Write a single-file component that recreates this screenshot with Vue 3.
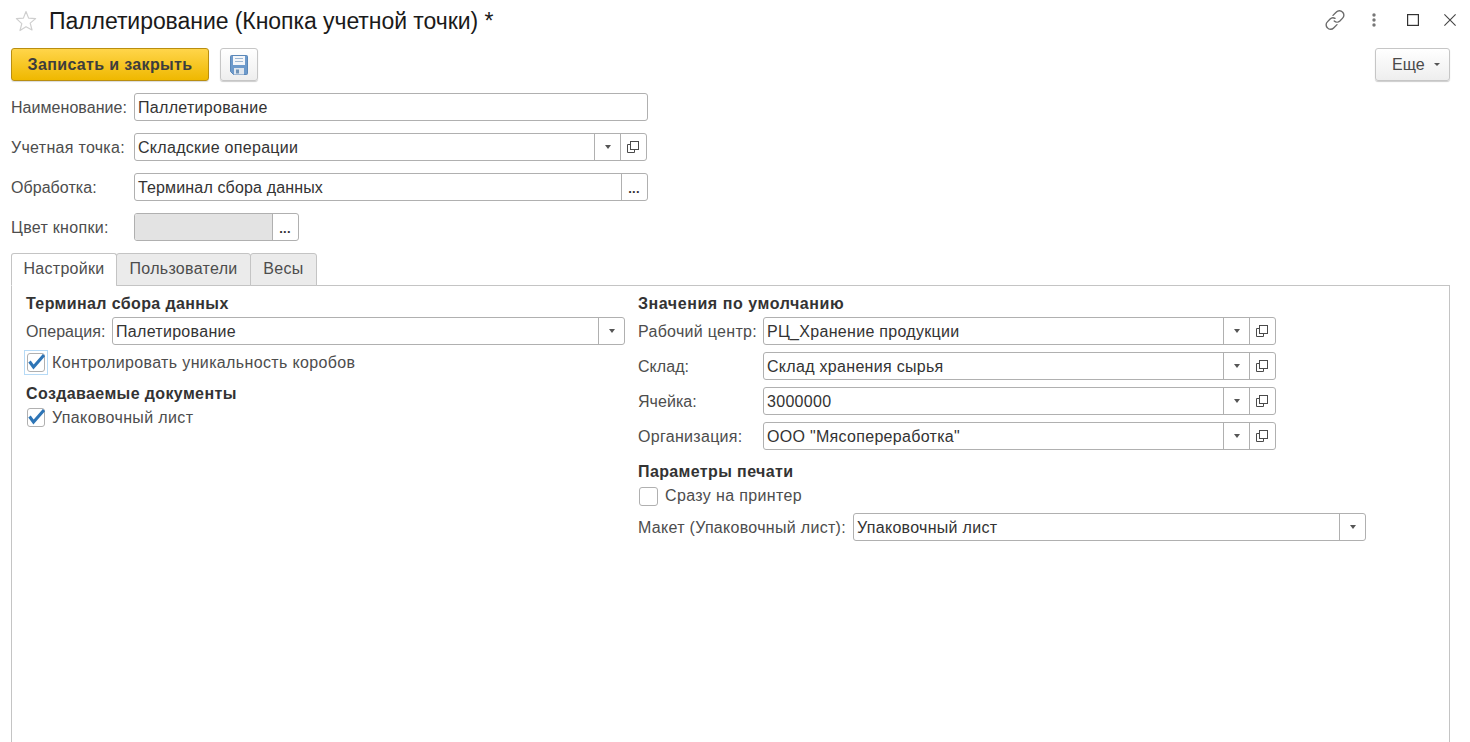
<script setup>
const leftFields = { label: 'Операция:', value: 'Палетирование' }
const rightFields = [
  { label: 'Рабочий центр:', value: 'РЦ_Хранение продукции', tight: false },
  { label: 'Склад:', value: 'Склад хранения сырья', tight: true },
  { label: 'Ячейка:', value: '3000000', tight: true },
  { label: 'Организация:', value: 'ООО "Мясопереработка"', tight: false },
]
</script>

<template>
  <div class="page">
    <header class="head">
      <svg class="star" viewBox="0 0 22 22" width="22" height="22">
        <path d="M11 1.500l2.600 6.600 7 .5-5.400 4.500 1.800 6.900L11 16.700 5 20.500l1.800-6.900L1.400 8.600l7-.5z" fill="#fff" stroke="#cfcfcf" stroke-width="1.200" stroke-linejoin="round"/>
      </svg>
      <h1 class="title">Паллетирование (Кнопка учетной точки) *</h1>
      <div class="head-icons">
        <svg class="ico-link" viewBox="2 2 16 16" width="20" height="20" fill="none" stroke="#6a6a6a" stroke-width="1.100" stroke-linecap="round">
          <path d="M8.400 6.300l2.700-2.700a3.300 3.300 0 0 1 4.900 0.100 3.300 3.300 0 0 1 .1 4.800l-2.200 2.300a3.200 3.200 0 0 1-4.500 0"/>
          <path d="M11.600 13.700l-2.700 2.700a3.300 3.300 0 0 1-4.900-.1 3.300 3.300 0 0 1-.1-4.800l2.200-2.300a3.200 3.200 0 0 1 3.900-.5"/>
        </svg>
        <svg class="ico-more" viewBox="0 0 4 14" width="4" height="14" fill="#777">
          <circle cx="2" cy="2" r="1.700"/><circle cx="2" cy="7" r="1.700"/><circle cx="2" cy="12" r="1.700"/>
        </svg>
        <svg class="ico-max" viewBox="0 0 12 12" width="12" height="12" fill="none" stroke="#333" stroke-width="1.200"><rect x=".6" y=".6" width="10.800" height="10.800"/></svg>
        <svg class="ico-close" viewBox="0 0 12 12" width="12" height="12" fill="none" stroke="#444" stroke-width="1.100"><path d="M.4.400l11.200 11.200M11.600.400L.4 11.600"/></svg>
      </div>
    </header>

    <div class="toolbar">
      <button class="btn-primary">Записать и закрыть</button>
      <button class="btn-save">
        <svg viewBox="0 0 18 20" width="18" height="20">
          <path d="M0.500 1.500a1 1 0 0 1 1-1h15a1 1 0 0 1 1 1v17a1 1 0 0 1-1 1h-13l-3-3z" fill="#6d9acb" stroke="#5a87b8" stroke-width="1"/>
          <rect x="3" y="1" width="12" height="9" fill="#f4f6f9"/>
          <path d="M5 3.500h8M5 6.500h8" stroke="#9fb8d2" stroke-width="1"/>
          <rect x="4" y="13" width="10" height="6.500" fill="#dfe6ee"/>
          <rect x="6" y="14.500" width="3" height="4" fill="#6f93b8"/>
        </svg>
      </button>
      <button class="btn-more">Еще<i class="tri small"></i></button>
    </div>

    <div class="form">
      <div class="row">
        <label class="lbl lbl-main tight">Наименование:</label>
        <div class="field w514"><span class="val">Паллетирование</span></div>
      </div>
      <div class="row">
        <label class="lbl lbl-main">Учетная точка:</label>
        <div class="field w513">
          <span class="val">Складские операции</span>
          <span class="cell"><i class="tri"></i></span>
          <span class="cell">
            <svg class="copy" viewBox="0 0 12 12" width="12" height="12" fill="none" stroke="#4a4a4a" stroke-width="1"><path d="M3.500 3.500h-3v8h7v-3"/><rect x="3.500" y=".5" width="8" height="8"/></svg>
          </span>
        </div>
      </div>
      <div class="row">
        <label class="lbl lbl-main tight">Обработка:</label>
        <div class="field w514">
          <span class="val narrow">Терминал сбора данных</span>
          <span class="cell dots">...</span>
        </div>
      </div>
      <div class="row">
        <label class="lbl lbl-main">Цвет кнопки:</label>
        <div class="field w165">
          <span class="val grey"></span>
          <span class="cell dots">...</span>
        </div>
      </div>
    </div>

    <nav class="tabs">
      <div class="tab active t1">Настройки</div>
      <div class="tab t2">Пользователи</div>
      <div class="tab t3">Весы</div>
    </nav>

    <section class="panel">
      <div class="col-left">
        <h2 class="sec">Терминал сбора данных</h2>
        <div class="row-sm">
          <label class="lbl lbl-op tight">{{ leftFields.label }}</label>
          <div class="field w513">
            <span class="val">{{ leftFields.value }}</span>
            <span class="cell"><i class="tri"></i></span>
          </div>
        </div>
        <div class="check first">
          <span class="focus">
            <span class="box">
              <svg viewBox="0 0 18 19" width="18" height="19" fill="none" stroke="#2e75b6" stroke-width="3"><path d="M2.500 8.500l4 5.500L17 2"/></svg>
            </span>
          </span>
          <span class="chk-text low">Контролировать уникальность коробов</span>
        </div>
        <h2 class="sec sec2">Создаваемые документы</h2>
        <div class="check second">
          <span class="box">
            <svg viewBox="0 0 18 19" width="18" height="19" fill="none" stroke="#2e75b6" stroke-width="3"><path d="M2.500 8.500l4 5.500L17 2"/></svg>
          </span>
          <span class="chk-text low">Упаковочный лист</span>
        </div>
      </div>

      <div class="col-right">
        <h2 class="sec sec-wide">Значения по умолчанию</h2>
        <div class="stack">
          <div v-for="f in rightFields" :key="f.label" class="row-sm">
            <label class="lbl lbl-r" :class="{ tight: f.tight }">{{ f.label }}</label>
            <div class="field w513">
              <span class="val">{{ f.value }}</span>
              <span class="cell"><i class="tri"></i></span>
              <span class="cell">
                <svg class="copy" viewBox="0 0 12 12" width="12" height="12" fill="none" stroke="#4a4a4a" stroke-width="1"><path d="M3.500 3.500h-3v8h7v-3"/><rect x="3.500" y=".5" width="8" height="8"/></svg>
              </span>
            </div>
          </div>
        </div>
        <h2 class="sec sec3">Параметры печати</h2>
        <div class="check third">
          <span class="box"></span>
          <span class="chk-text">Сразу на принтер</span>
        </div>
        <div class="row-sm maket">
          <label class="lbl lbl-m">Макет (Упаковочный лист):</label>
          <div class="field w513">
            <span class="val">Упаковочный лист</span>
            <span class="cell"><i class="tri"></i></span>
          </div>
        </div>
      </div>
    </section>
  </div>
</template>

<style>
html, body { margin: 0; background: #fff; overflow: hidden; }
</style>

<style scoped>
.page {
  width: 1470px;
  height: 742px;
  display: flex;
  flex-direction: column;
  overflow: hidden;
  font-family: "Liberation Sans", Arial, sans-serif;
  font-size: 16px;
  letter-spacing: .3px;
  color: #333;
  background: #fff;
  box-sizing: border-box;
}
.head {
  height: 42px;
  flex: none;
  display: flex;
  align-items: center;
  padding: 0 14px 0 15px;
  box-sizing: border-box;
}
.star { flex: none; }
.title {
  margin: 0 0 0 12px;
  font-size: 23px;
  letter-spacing: -.06px;
  font-weight: 400;
  color: #1a1a1a;
  line-height: 42px;
}
.head-icons { margin-left: auto; display: flex; align-items: center; position: relative; top: -1px; }
.ico-more { margin-left: 27px; }
.ico-max { margin-left: 31px; }
.ico-close { margin-left: 25px; }

.toolbar {
  height: 33px;
  margin-top: 6px;
  flex: none;
  display: flex;
  padding: 0 20px 0 11px;
}
button { font-family: inherit; padding: 0; box-sizing: border-box; cursor: default; }
.btn-primary {
  width: 198px;
  height: 33px;
  border: 1px solid #b98e10;
  border-radius: 3px;
  background: linear-gradient(#ffd54a, #efb800);
  font-size: 16px;
  font-weight: 700;
  letter-spacing: .35px;
  color: #3d3d3d;
  box-shadow: 0 1px 1px rgba(0,0,0,.15);
}
.btn-save {
  width: 38px;
  height: 33px;
  margin-left: 11px;
  border: 1px solid #c6c6c6;
  border-radius: 3px;
  background: linear-gradient(#fff, #eeeeee);
  box-shadow: 0 1px 1px rgba(0,0,0,.2);
  display: flex;
  align-items: center;
  justify-content: center;
}
.btn-more {
  width: 75px;
  height: 33px;
  margin-left: auto;
  border: 1px solid #c6c6c6;
  border-radius: 3px;
  background: linear-gradient(#fff, #eeeeee);
  box-shadow: 0 1px 1px rgba(0,0,0,.2);
  font-size: 16px;
  letter-spacing: .1px;
  color: #4a4a4a;
  display: flex;
  align-items: center;
  padding-left: 16px;
}

.tri {
  display: block;
  width: 0;
  height: 0;
  border-left: 3.5px solid transparent;
  border-right: 3.5px solid transparent;
  border-top: 4px solid #555;
}
.tri.small {
  margin-left: 9px;
  border-left-width: 3px;
  border-right-width: 3px;
  border-top-width: 3px;
}

.form {
  margin-top: 12px;
  padding-left: 11px;
  display: flex;
  flex-direction: column;
  gap: 12px;
  flex: none;
}
.row, .row-sm {
  height: 28px;
  display: flex;
  align-items: center;
}
.lbl { color: #4d4d4d; white-space: nowrap; flex: none; padding-top: 1px; }
.lbl.tight { letter-spacing: .05px; }
.lbl-main { width: 123px; }
.lbl-op { width: 86px; }
.lbl-r { width: 125px; }
.lbl-m { width: 215px; }

.field {
  height: 28px;
  box-sizing: border-box;
  border: 1px solid #b0b0b0;
  border-radius: 3px;
  display: flex;
  background: #fff;
  flex: none;
  overflow: hidden;
}
.w514 { width: 514px; }
.w513 { width: 513px; }
.w165 { width: 165px; }
.val {
  flex: 1;
  padding-left: 3px;
  line-height: 27px;
  box-sizing: border-box;
  color: #333;
  white-space: nowrap;
}
.val.narrow { letter-spacing: .15px; }
.val.grey { background: #e3e3e3; }
.cell {
  flex: none;
  width: 26px;
  box-sizing: border-box;
  border-left: 1px solid #b0b0b0;
  display: flex;
  align-items: center;
  justify-content: center;
}
.copy { margin-right: 1px; }
.dots {
  color: #333;
  font-weight: 700;
  font-size: 13px;
  letter-spacing: .3px;
  line-height: 30px;
  align-items: flex-start;
  padding-right: 1px;
}

.tabs {
  margin-top: 12px;
  padding-left: 11px;
  height: 32px;
  flex: none;
  display: flex;
  position: relative;
  z-index: 1;
}
.tab {
  box-sizing: border-box;
  height: 33px;
  border: 1px solid #c4c4c4;
  border-radius: 3px 3px 0 0;
  background: #ebebeb;
  color: #4d4d4d;
  text-align: center;
  line-height: 30px;
  margin-left: -1px;
}
.tab:first-child { margin-left: 0; }
.tab.active { background: #fff; border-bottom-color: #fff; }
.t1 { width: 106px; }
.t2 { width: 135px; }
.t3 { width: 67px; }

.panel {
  flex: 1;
  margin: 0 20px 0 11px;
  border: 1px solid #c4c4c4;
  border-bottom: 0;
  display: flex;
  box-sizing: border-box;
  padding-left: 14px;
  min-height: 0;
}
.col-left { width: 612px; flex: none; }
.col-right { flex: 1; }
.sec {
  margin: 0;
  font-size: 16px;
  font-weight: 700;
  letter-spacing: .38px;
  color: #333;
  line-height: 18px;
  padding-top: 9px;
  height: 31px;
  box-sizing: border-box;
}
.sec-wide { letter-spacing: .56px; }
.sec2 { padding-top: 0; height: 22px; margin-top: 12px; line-height: 20px; }
.sec3 { padding-top: 0; height: 18px; margin-top: 13px; }
.check { display: flex; align-items: center; height: 20px; position: relative; }
.check.first { margin-top: 7px; }
.check.second { margin-top: 1px; }
.check.third { margin-top: 5px; }
.box {
  display: block;
  width: 18px;
  height: 19px;
  margin-left: 1px;
  box-sizing: border-box;
  border: 1px solid #b0b0b0;
  border-radius: 3px;
  flex: none;
  position: relative;
  background: #fff;
}
.box svg { position: absolute; left: -1px; top: -1px; }
.focus {
  display: block;
  flex: none;
  margin-left: 1px;
  outline: 1.5px solid #b6daf6;
  outline-offset: 2.5px;
  width: 18px;
  height: 19px;
}
.focus .box { margin-left: 0; }
.chk-text { margin-left: 7px; color: #4d4d4d; letter-spacing: .36px; }
.chk-text.low { padding-top: 2px; }
.third .box { width: 19px; }
.stack { display: flex; flex-direction: column; gap: 7px; }
.maket { margin-top: 7px; }
</style>
